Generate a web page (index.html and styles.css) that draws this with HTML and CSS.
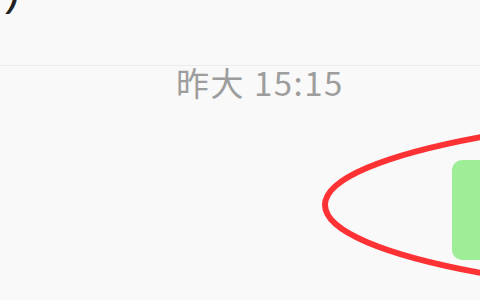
FILE: index.html
```html
<!DOCTYPE html>
<html lang="zh">
<head>
<meta charset="utf-8">
<link rel="stylesheet" href="styles.css">
</head>
<body>
<div class="page">
  <header class="header">
    <span class="title">)</span>
  </header>
  <main class="chat">
    <div class="time">昨大 15:15</div>
    <div class="row">
      <div class="bubble"></div>
    </div>
  </main>
  <svg class="mark" width="480" height="300" viewBox="0 0 480 300">
    <ellipse cx="925" cy="205" rx="600" ry="101" fill="none" stroke="#fd3235" stroke-width="6"/>
  </svg>
</div>
</body>
</html>
```
FILE: styles.css
```css
html, body {
  margin: 0;
  padding: 0;
  background: #f9f9f9;
}
.page {
  position: relative;
  width: 480px;
  height: 300px;
  overflow: hidden;
  background: #f9f9f9;
  font-family: "Noto Sans CJK SC", "Noto Sans", sans-serif;
}
.header {
  height: 65px;
  border-bottom: 1px solid #ebebeb;
  background: #f9f9f9;
  overflow: hidden;
}
.title {
  display: block;
  margin-top: -40px;
  margin-left: 5px;
  font-size: 46px;
  line-height: 56px;
  color: #222;
  font-family: "Liberation Sans", sans-serif;
}
.chat {
  display: flex;
  flex-direction: column;
}
.time {
  margin-left: 176px;
  font-size: 33px;
  line-height: 33px;
  letter-spacing: 1.5px;
  color: #9d9d9d;
  white-space: nowrap;
}
.row {
  display: flex;
  margin-top: 61px;
  padding-left: 452px;
}
.bubble {
  flex: none;
  width: 80px;
  height: 100px;
  border-radius: 10px;
  background: #9eee98;
}
.mark {
  position: absolute;
  left: 0;
  top: 0;
}
```
